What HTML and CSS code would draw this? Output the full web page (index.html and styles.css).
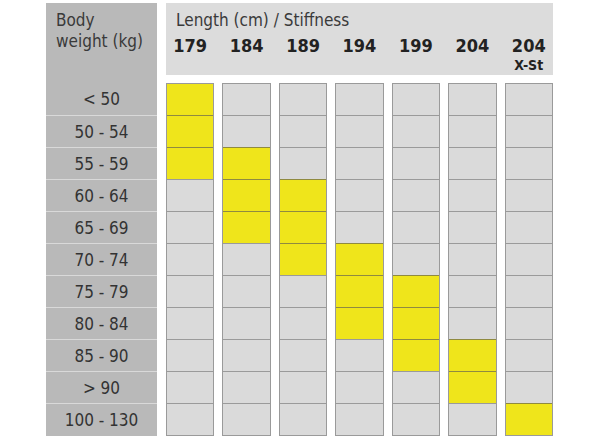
FILE: index.html
```html
<!DOCTYPE html>
<html>
<head>
<meta charset="utf-8">
<link rel="stylesheet" href="styles.css">
</head>
<body>
<div class="chart">
  <div class="weights">
    <div class="weights-head">Body<br>weight (kg)</div>
    <div class="wrow">&lt; 50</div>
    <div class="wrow">50 - 54</div>
    <div class="wrow">55 - 59</div>
    <div class="wrow">60 - 64</div>
    <div class="wrow">65 - 69</div>
    <div class="wrow">70 - 74</div>
    <div class="wrow">75 - 79</div>
    <div class="wrow">80 - 84</div>
    <div class="wrow">85 - 90</div>
    <div class="wrow">&gt; 90</div>
    <div class="wrow">100 - 130</div>
  </div>
  <div class="main">
    <div class="head">
      <div class="head-title">Length (cm) / Stiffness</div>
      <div class="lengths">
        <div class="len">179</div>
        <div class="len">184</div>
        <div class="len">189</div>
        <div class="len">194</div>
        <div class="len">199</div>
        <div class="len">204</div>
        <div class="len">204<span class="sub">X-St</span></div>
      </div>
    </div>
    <div class="grid">
      <div class="col"><div class="cell on"></div><div class="cell on"></div><div class="cell on"></div><div class="cell"></div><div class="cell"></div><div class="cell"></div><div class="cell"></div><div class="cell"></div><div class="cell"></div><div class="cell"></div><div class="cell"></div></div>
      <div class="col"><div class="cell"></div><div class="cell"></div><div class="cell on"></div><div class="cell on"></div><div class="cell on"></div><div class="cell"></div><div class="cell"></div><div class="cell"></div><div class="cell"></div><div class="cell"></div><div class="cell"></div></div>
      <div class="col"><div class="cell"></div><div class="cell"></div><div class="cell"></div><div class="cell on"></div><div class="cell on"></div><div class="cell on"></div><div class="cell"></div><div class="cell"></div><div class="cell"></div><div class="cell"></div><div class="cell"></div></div>
      <div class="col"><div class="cell"></div><div class="cell"></div><div class="cell"></div><div class="cell"></div><div class="cell"></div><div class="cell on"></div><div class="cell on"></div><div class="cell on"></div><div class="cell"></div><div class="cell"></div><div class="cell"></div></div>
      <div class="col"><div class="cell"></div><div class="cell"></div><div class="cell"></div><div class="cell"></div><div class="cell"></div><div class="cell"></div><div class="cell on"></div><div class="cell on"></div><div class="cell on"></div><div class="cell"></div><div class="cell"></div></div>
      <div class="col"><div class="cell"></div><div class="cell"></div><div class="cell"></div><div class="cell"></div><div class="cell"></div><div class="cell"></div><div class="cell"></div><div class="cell"></div><div class="cell on"></div><div class="cell on"></div><div class="cell"></div></div>
      <div class="col"><div class="cell"></div><div class="cell"></div><div class="cell"></div><div class="cell"></div><div class="cell"></div><div class="cell"></div><div class="cell"></div><div class="cell"></div><div class="cell"></div><div class="cell"></div><div class="cell on"></div></div>
    </div>
  </div>
</div>
</body>
</html>
```
FILE: styles.css
```css
html, body {
  margin: 0;
  padding: 0;
  background: #ffffff;
}
body {
  width: 600px;
  height: 440px;
  overflow: hidden;
  font-family: "DejaVu Sans Condensed", "DejaVu Sans", sans-serif;
  font-stretch: condensed;
  color: #333333;
}
.chart {
  display: flex;
  gap: 9px;
  padding: 3px 0 0 46px;
}
.weights {
  width: 111px;
  background: #b9b9b9;
  display: flex;
  flex-direction: column;
}
.weights-head {
  height: 80px;
  box-sizing: border-box;
  padding: 7px 0 0 10px;
  font-size: 17px;
  line-height: 21px;
  color: #3a3a3a;
}
.wrow {
  height: 32px;
  box-sizing: border-box;
  border-top: 1px solid #d9d9d9;
  display: flex;
  align-items: center;
  justify-content: center;
  font-size: 17px;
  color: #333333;
}
.weights-head + .wrow {
  border-top: none;
}
.main {
  width: 387px;
  display: flex;
  flex-direction: column;
  gap: 8px;
}
.head {
  height: 72px;
  background: #dcdcdc;
  box-sizing: border-box;
  padding: 7px 0 0 0;
}
.head-title {
  padding-left: 10px;
  font-size: 17px;
  line-height: 21px;
  color: #3a3a3a;
}
.lengths {
  display: grid;
  grid-template-columns: repeat(7, 1fr);
  column-gap: 8px;
  margin-top: 5px;
}
.len {
  text-align: center;
  font-weight: bold;
  font-size: 18px;
  line-height: 20px;
  color: #222222;
  display: flex;
  flex-direction: column;
  align-items: center;
}
.sub {
  font-size: 14px;
  line-height: 16px;
  margin-top: 1px;
}
.grid {
  display: grid;
  grid-template-columns: repeat(7, 1fr);
  column-gap: 8px;
}
.col {
  display: flex;
  flex-direction: column;
  border: 1px solid #9a9a9a;
  border-top: none;
}
.cell {
  height: 32px;
  box-sizing: border-box;
  border-top: 1px solid #9a9a9a;
  background: #dadada;
}
.cell.on {
  background: #efe51b;
  border-top-color: #8f8a40;
}
.cell:first-child {
  border-top-color: #9a9a9a;
}
```
